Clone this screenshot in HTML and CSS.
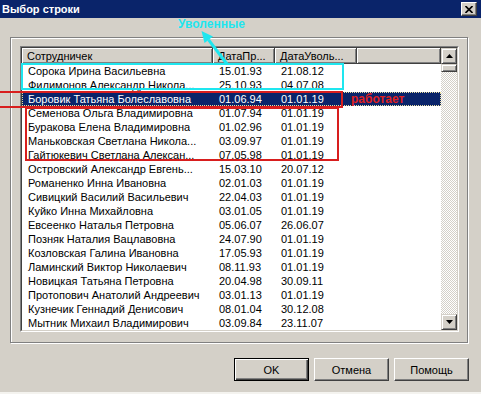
FILE: index.html
```html
<!DOCTYPE html>
<html lang="ru">
<head>
  <meta charset="UTF-8">
  <title>Выбор строки</title>
  <link rel="stylesheet" href="styles.css">
</head>
<body>

  <div class="window">
    <div class="titlebar">
      <span class="title">Выбор строки</span>
      <button class="close">
        <svg width="8" height="7" viewBox="0 0 8 7"><path d="M0.5 0 L7.5 7 M7.5 0 L0.5 7" stroke="#000" stroke-width="1.6"/></svg>
      </button>
    </div>

    <div class="client">
      <div class="frame">
        <div class="list">
          <div class="list-inner">
            <div class="table">
              <div class="head">
                <div class="hcell">Сотрудничек</div>
                <div class="hcell">ДатаПр...</div>
                <div class="hcell">ДатаУволь...</div>
                <div class="hcell"></div>
              </div>
              <div class="row"><span>Сорока Ирина Васильевна</span><span class="d">15.01.93</span><span class="d">21.08.12</span></div>
              <div class="row"><span>Филимонов Александр Никола...</span><span class="d">25.10.93</span><span class="d">04.07.08</span></div>
              <div class="row sel"><span>Боровик Татьяна Болеславовна</span><span class="d">01.06.94</span><span class="d">01.01.19</span></div>
              <div class="row"><span>Семенова Ольга Владимировна</span><span class="d">01.07.94</span><span class="d">01.01.19</span></div>
              <div class="row"><span>Буракова Елена Владимировна</span><span class="d">01.02.96</span><span class="d">01.01.19</span></div>
              <div class="row"><span>Маньковская Светлана Никола...</span><span class="d">03.09.97</span><span class="d">01.01.19</span></div>
              <div class="row"><span>Гайтюкевич Светлана Алексан...</span><span class="d">07.05.98</span><span class="d">01.01.19</span></div>
              <div class="row"><span>Островский Александр Евгень...</span><span class="d">15.03.10</span><span class="d">20.07.12</span></div>
              <div class="row"><span>Романенко Инна Ивановна</span><span class="d">02.01.03</span><span class="d">01.01.19</span></div>
              <div class="row"><span>Сивицкий Василий Васильевич</span><span class="d">22.04.03</span><span class="d">01.01.19</span></div>
              <div class="row"><span>Куйко Инна Михайловна</span><span class="d">03.01.05</span><span class="d">01.01.19</span></div>
              <div class="row"><span>Евсеенко Наталья Петровна</span><span class="d">05.06.07</span><span class="d">26.06.07</span></div>
              <div class="row"><span>Позняк Наталия Вацлавовна</span><span class="d">24.07.90</span><span class="d">01.01.19</span></div>
              <div class="row"><span>Козловская Галина Ивановна</span><span class="d">17.05.93</span><span class="d">01.01.19</span></div>
              <div class="row"><span>Ламинский Виктор Николаевич</span><span class="d">08.11.93</span><span class="d">01.01.19</span></div>
              <div class="row"><span>Новицкая Татьяна Петровна</span><span class="d">20.04.98</span><span class="d">30.09.11</span></div>
              <div class="row"><span>Протопович Анатолий Андреевич</span><span class="d">03.01.13</span><span class="d">01.01.19</span></div>
              <div class="row"><span>Кузнечик Геннадий Денисович</span><span class="d">08.01.04</span><span class="d">30.12.08</span></div>
              <div class="row"><span>Мытник Михаил Владимирович</span><span class="d">03.09.84</span><span class="d">23.11.07</span></div>
            </div>
            <div class="scrollbar">
              <div class="sb-btn"><svg width="7" height="4" viewBox="0 0 7 4"><path d="M3.5 0 L7 4 L0 4 Z" fill="#000"/></svg></div>
              <div class="thumb"></div>
              <div class="track"></div>
              <div class="sb-btn"><svg width="7" height="4" viewBox="0 0 7 4"><path d="M0 0 L7 0 L3.5 4 Z" fill="#000"/></svg></div>
            </div>
          </div>
        </div>
      </div>

      <div class="actions">
        <button class="btn default">OK</button>
        <button class="btn">Отмена</button>
        <button class="btn">Помощь</button>
      </div>
    </div>

    <!-- пометки поверх списка -->
    <div class="note-box cyan-box"></div>
    <div class="note-box red-box1"></div>
    <div class="note-box red-box2"></div>
    <span class="note cyan-note">Уволенные</span>
    <span class="note red-note">работает</span>
    <svg class="arrow" width="481" height="394" viewBox="0 0 481 394">
      <path d="M208.6 39.8 L227 64" stroke="#1ee6ef" stroke-width="3"/>
      <path d="M201.5 31 L213 36.5 L204.5 43 Z" fill="#1ee6ef"/>
    </svg>
  </div>

</body>
</html>
```

FILE: styles.css
```css
* {
  box-sizing: border-box;
}
body {
  margin: 0;
  background: #d4d0c8;
  font-family: "Liberation Sans", Arial, sans-serif;
  font-size: 11px;
  color: #000;
}
.window {
  position: relative;
  width: 481px;
  height: 394px;
  overflow: hidden;
  border-bottom: 2px solid #f4f3ef;
}
.titlebar {
  height: 18px;
  background: #0a246a;
  color: #fff;
  display: flex;
  align-items: center;
  justify-content: space-between;
  padding: 0 4px 0 2px;
}
.title {
  font-weight: bold;
  font-size: 11px;
}
.close {
  width: 16px;
  height: 14px;
  padding: 0;
  background: #d4d0c8;
  border: 1px solid;
  border-color: #fff #404040 #404040 #fff;
  box-shadow: inset -1px -1px #808080;
  display: flex;
  align-items: center;
  justify-content: center;
}
.client {
  padding: 19px 0 0 10px;
}
.frame {
  width: 458px;
  height: 306px;
  border: 1px solid #808080;
  box-shadow: inset 1px 1px #fff, 1px 1px #fff;
  padding: 8px 0 0 9px;
}
.list {
  width: 439px;
  height: 286px;
  border: 1px solid;
  border-color: #808080 #fff #fff #808080;
}
.list-inner {
  height: 100%;
  display: flex;
  background: #fff;
  border: 1px solid;
  border-color: #404040 #d4d0c8 #d4d0c8 #404040;
}
.table {
  flex: 1;
  overflow: hidden;
}
.head, .row {
  display: grid;
  grid-template-columns: 191px 62px 82px 1fr;
}
.head {
  height: 16px;
}
.hcell {
  background: #d4d0c8;
  border-right: 1px solid #404040;
  border-bottom: 1px solid #404040;
  box-shadow: inset 1px 1px #fff, inset -1px -1px #808080;
  padding-left: 5px;
  line-height: 16px;
  white-space: nowrap;
  overflow: hidden;
}
.row {
  height: 14px;
  padding-top: 1px;
  line-height: 13px;
  white-space: nowrap;
}
.row span {
  padding-left: 6px;
  overflow: hidden;
}
.row .d {
  padding-left: 6px;
}
.row.sel {
  background: #0a246a;
  color: #fff;
  outline: 1px dotted #e8dca0;
  outline-offset: -1px;
}
.scrollbar {
  width: 16px;
  display: flex;
  flex-direction: column;
}
.sb-btn, .thumb {
  background: #d4d0c8;
  border: 1px solid;
  border-color: #d4d0c8 #404040 #404040 #d4d0c8;
  box-shadow: inset 1px 1px #fff, inset -1px -1px #808080;
}
.sb-btn {
  height: 16px;
  display: flex;
  align-items: center;
  justify-content: center;
}
.thumb {
  height: 8px;
}
.track {
  flex: 1;
  background: repeating-conic-gradient(#d4d0c8 0 25%, #fff 0 50%) 0 0 / 2px 2px;
}
.actions {
  display: flex;
  justify-content: flex-end;
  gap: 5px;
  padding: 15px 12px 0 0;
}
.btn {
  width: 75px;
  height: 23px;
  padding: 0;
  background: #d4d0c8;
  border: 1px solid;
  border-color: #fff #404040 #404040 #fff;
  box-shadow: inset -1px -1px #808080;
  font: 11px "Liberation Sans", Arial, sans-serif;
  color: #000;
}
.btn.default {
  border: 1px solid #000;
  box-shadow: inset 1px 1px #fff, inset -1px -1px #404040, inset -2px -2px #808080;
}

/* пометки */
.note-box {
  position: absolute;
  border: 2px solid;
}
.cyan-box {
  left: 21px;
  top: 63px;
  width: 323px;
  height: 27px;
  border-color: #1ee6ef;
}
.red-box1 {
  left: -4px;
  top: 91px;
  width: 347px;
  height: 17px;
  border-color: #d81e1e;
}
.red-box2 {
  left: 25px;
  top: 107px;
  width: 314px;
  height: 54px;
  border-color: #d81e1e;
}
.note {
  position: absolute;
  font-weight: bold;
  font-size: 12px;
  line-height: 12px;
}
.cyan-note {
  left: 178px;
  top: 18px;
  color: #1ee6ef;
}
.red-note {
  left: 351px;
  top: 93px;
  color: #e02020;
}
.arrow {
  position: absolute;
  left: 0;
  top: 0;
  pointer-events: none;
}
```
